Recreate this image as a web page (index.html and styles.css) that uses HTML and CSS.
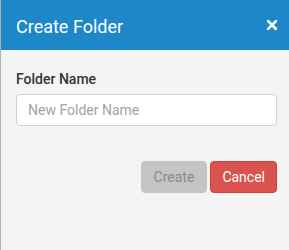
FILE: index.html
```html
<!DOCTYPE html>
<html>
<head>
<meta charset="utf-8">
<link rel="stylesheet" href="styles.css">
</head>
<body>
<div class="modal">
  <div class="modal-header">
    <h4 class="modal-title">Create Folder</h4>
    <button class="close" type="button" aria-label="Close">
      <svg width="10" height="10" viewBox="0 0 10 10"><path d="M1 1L9 9M9 1L1 9" stroke="#fff" stroke-width="2.6" stroke-linecap="square"/></svg>
    </button>
  </div>
  <div class="modal-body">
    <label class="field-label" for="folder">Folder Name</label>
    <input class="field-input" id="folder" type="text" placeholder="New Folder Name">
  </div>
  <div class="modal-footer">
    <button class="btn btn-disabled" type="button">Create</button>
    <button class="btn btn-danger" type="button">Cancel</button>
  </div>
</div>
</body>
</html>
```
FILE: styles.css
```css
html, body {
  margin: 0;
  padding: 0;
  height: 100%;
}
body {
  font-family: Roboto, "Liberation Sans", sans-serif;
  background: #f4f4f4;
}
.modal {
  height: 100%;
  box-sizing: border-box;
  border-left: 1px solid rgba(0, 0, 0, 0.28);
  background: #f4f4f4;
  display: flex;
  flex-direction: column;
}
.modal-header {
  height: 50px;
  box-sizing: border-box;
  background: #1e87c8;
  display: flex;
  align-items: center;
  justify-content: space-between;
  padding: 2px 12px 0 15px;
}
.modal-title {
  margin: 0;
  font-size: 18px;
  font-weight: 400;
  line-height: 21px;
  color: #fff;
}
.close {
  border: 0;
  background: none;
  padding: 0;
  margin: 0 0 2px;
  width: 11px;
  height: 11px;
  display: flex;
  align-items: center;
  justify-content: center;
  cursor: pointer;
}
.modal-body {
  padding: 19px 12px 0 15px;
  display: flex;
  flex-direction: column;
}
.field-label {
  font-size: 14px;
  font-weight: 500;
  line-height: 20px;
  color: #333;
}
.field-input {
  margin-top: 5px;
  height: 32px;
  box-sizing: border-box;
  border: 1px solid #cfcfcf;
  border-radius: 4px;
  background: #fff;
  padding: 0 11px;
  font-family: Roboto, "Liberation Sans", sans-serif;
  font-size: 14px;
  color: #333;
  outline: none;
}
.field-input::placeholder {
  color: #a3a3a3;
}
.modal-footer {
  padding: 35px 12px 0 15px;
  display: flex;
  justify-content: flex-end;
  gap: 3px;
}
.btn {
  height: 32px;
  box-sizing: border-box;
  padding: 0 12px;
  border: 1px solid transparent;
  border-radius: 4px;
  font-family: Roboto, "Liberation Sans", sans-serif;
  font-size: 14px;
  line-height: 30px;
}
.btn-disabled {
  background: #c4c4c4;
  border-color: #c4c4c4;
  color: #8a8a8a;
}
.btn-danger {
  padding: 0 11px;
  background: #d9534f;
  border-color: #d43f3a;
  color: #fff;
}
```
